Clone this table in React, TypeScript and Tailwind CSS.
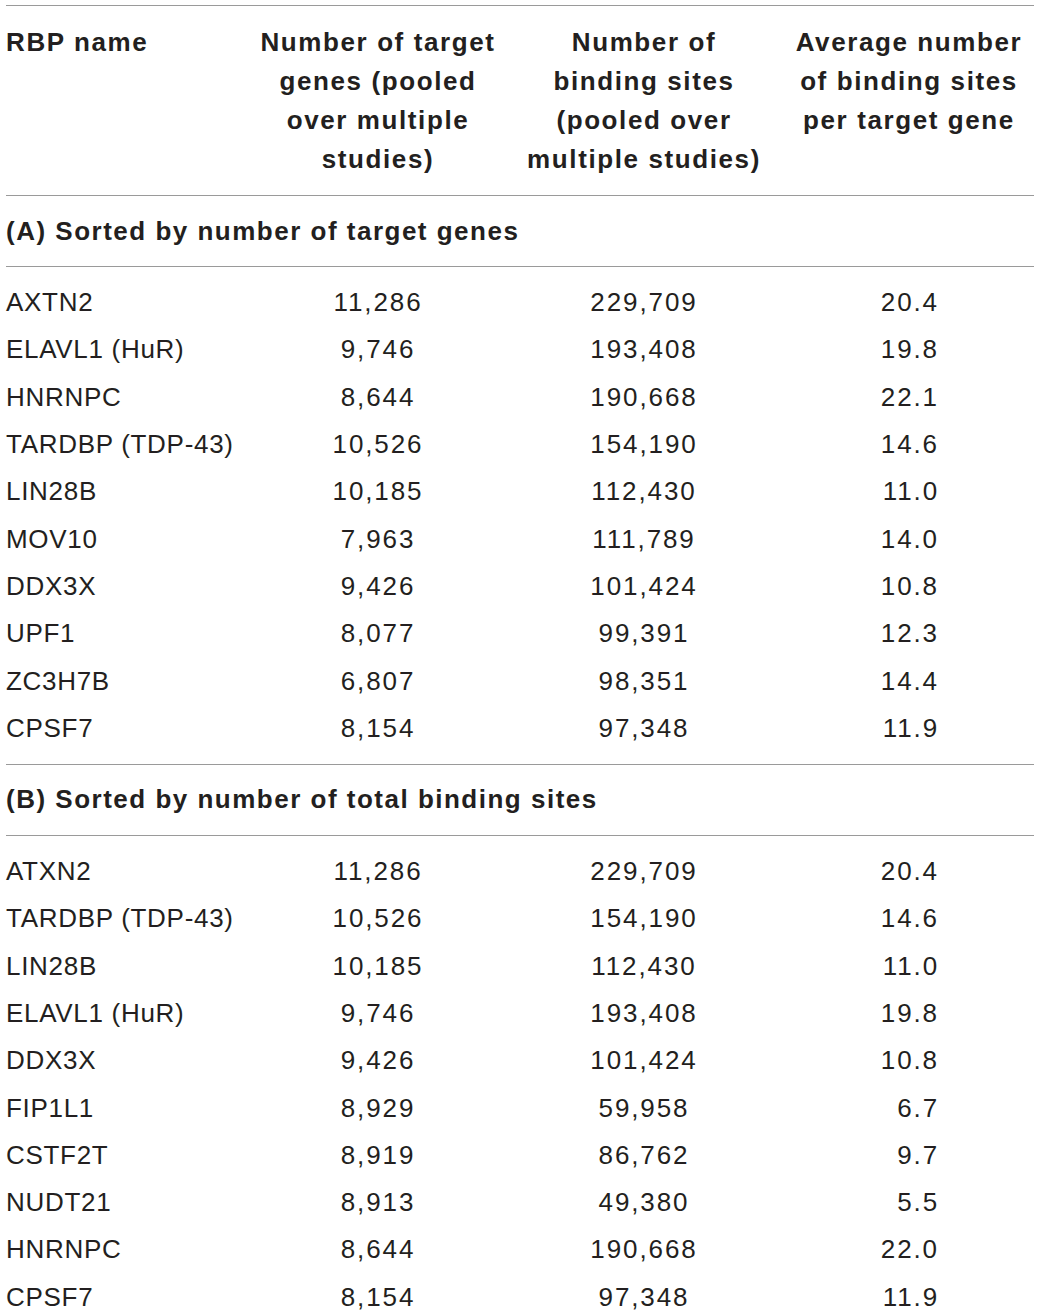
import React from 'react';

type Row = [string, string, string, string];

const sectionA: Row[] = [
  ['AXTN2', '11,286', '229,709', '20.4'],
  ['ELAVL1 (HuR)', '9,746', '193,408', '19.8'],
  ['HNRNPC', '8,644', '190,668', '22.1'],
  ['TARDBP (TDP-43)', '10,526', '154,190', '14.6'],
  ['LIN28B', '10,185', '112,430', '11.0'],
  ['MOV10', '7,963', '111,789', '14.0'],
  ['DDX3X', '9,426', '101,424', '10.8'],
  ['UPF1', '8,077', '99,391', '12.3'],
  ['ZC3H7B', '6,807', '98,351', '14.4'],
  ['CPSF7', '8,154', '97,348', '11.9'],
];

const sectionB: Row[] = [
  ['ATXN2', '11,286', '229,709', '20.4'],
  ['TARDBP (TDP-43)', '10,526', '154,190', '14.6'],
  ['LIN28B', '10,185', '112,430', '11.0'],
  ['ELAVL1 (HuR)', '9,746', '193,408', '19.8'],
  ['DDX3X', '9,426', '101,424', '10.8'],
  ['FIP1L1', '8,929', '59,958', '6.7'],
  ['CSTF2T', '8,919', '86,762', '9.7'],
  ['NUDT21', '8,913', '49,380', '5.5'],
  ['HNRNPC', '8,644', '190,668', '22.0'],
  ['CPSF7', '8,154', '97,348', '11.9'],
];

const Rule = () => <div className="h-px bg-[#9a9a9a]" />;

const DataRow: React.FC<{ row: Row }> = ({ row }) => (
  <div className="flex items-center h-[47.3px]">
    <div className="w-[244px] whitespace-nowrap tracking-[0.7px]">{row[0]}</div>
    <div className="w-[254px] text-center tracking-[1.9px] pl-[2px]">{row[1]}</div>
    <div className="w-[278px] text-center tracking-[1.9px] pl-[2px]">{row[2]}</div>
    <div className="w-[252px] text-right pr-[95px] tracking-[1.9px]">{row[3]}</div>
  </div>
);

const Section: React.FC<{ title: string; rows: Row[] }> = ({ title, rows }) => (
  <>
    <div className="h-[70px] flex items-center font-bold tracking-[1.5px]">{title}</div>
    <Rule />
    <div className="py-[12px]">
      {rows.map((r, i) => (
        <DataRow key={i} row={r} />
      ))}
    </div>
  </>
);

export default function App() {
  return (
    <div
      className="bg-white w-[1040px] h-[1315px] overflow-hidden text-[#231f20] text-[26px] leading-[39px] pt-[5px] px-[6px]"
      style={{ fontFamily: '"Liberation Sans", Arial, sans-serif' }}
    >
      <Rule />
      <div className="flex font-bold pt-[17px] pb-[16px] tracking-[1.6px]">
        <div className="w-[244px]">RBP name</div>
        <div className="w-[254px] text-center pl-[2px]">
          Number of target
          <br />
          genes (pooled
          <br />
          over multiple
          <br />
          studies)
        </div>
        <div className="w-[278px] text-center pl-[2px]">
          Number of
          <br />
          binding sites
          <br />
          (pooled over
          <br />
          multiple studies)
        </div>
        <div className="w-[252px] text-center pl-[2px]">
          Average number
          <br />
          of binding sites
          <br />
          per target gene
        </div>
      </div>
      <Rule />
      <Section title="(A) Sorted by number of target genes" rows={sectionA} />
      <Rule />
      <Section title="(B) Sorted by number of total binding sites" rows={sectionB} />
    </div>
  );
}
